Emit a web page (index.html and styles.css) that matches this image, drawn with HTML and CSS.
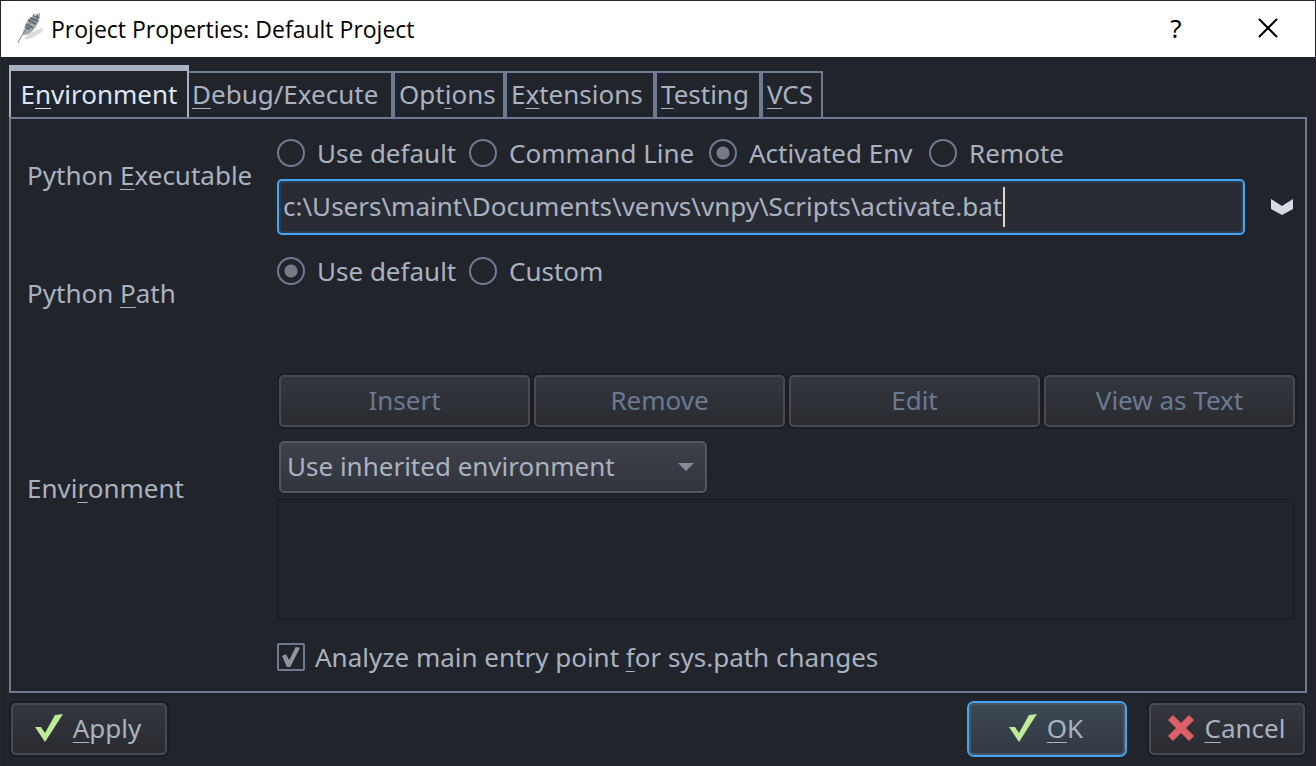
FILE: index.html
```html
<!DOCTYPE html>
<html lang="en">
<head>
<meta charset="utf-8">
<title>Project Properties: Default Project</title>
<link rel="stylesheet" href="styles.css">
</head>
<body>
<div class="dialog">
  <header class="titlebar">
    <svg class="app-icon" viewBox="0 0 30 34" aria-hidden="true">
      <path d="M7 27C10 22 18 18 26 16C27 19 24 21 20 23C15 26 10 28 7 27Z" fill="#dcdcdc"/>
      <path d="M6 23C6 15 10 7 17 3C20 1 23 0 23 2C23 7 21 12 18 16C14 21 11 23 7 23Z" fill="#a4aaad"/>
      <path d="M8 15L13 17M9 12L16 16M11 8L19 12M13 6L21 9M16 3L22 6" stroke="#626b70" stroke-width="2"/>
      <path d="M1 31C4 24 9 16 21 3" fill="none" stroke="#74797c" stroke-width="1"/>
      <path d="M6 19L8 15M17 4L22 1" stroke="#eeeeee" stroke-width="1"/>
    </svg>
    <h1 class="title">Project Properties: Default Project</h1>
    <button class="window-button" type="button" aria-label="Help">?</button>
    <button class="window-button" type="button" aria-label="Close">
      <svg class="close-icon" viewBox="0 0 20 20" aria-hidden="true"><path d="M1 1L19 19M19 1L1 19" stroke="#000" stroke-width="2"/></svg>
    </button>
  </header>

  <form class="content">
    <div class="tabs" role="tablist">
      <button class="tab tab-active" type="button" role="tab" aria-selected="true">E<u>n</u>vironment</button>
      <button class="tab" type="button" role="tab"><u>D</u>ebug/Execute</button>
      <button class="tab" type="button" role="tab">Opt<u>i</u>ons</button>
      <button class="tab" type="button" role="tab">E<u>x</u>tensions</button>
      <button class="tab" type="button" role="tab"><u>T</u>esting</button>
      <button class="tab" type="button" role="tab"><u>V</u>CS</button>
    </div>

    <div class="panel" role="tabpanel">
      <label class="row-label" for="executable">Python <u>E</u>xecutable</label>
      <div class="field">
        <div class="radios">
          <label class="choice"><input class="radio" type="radio" name="exe">Use default</label>
          <label class="choice"><input class="radio" type="radio" name="exe">Command Line</label>
          <label class="choice"><input class="radio" type="radio" name="exe" checked>Activated Env</label>
          <label class="choice"><input class="radio" type="radio" name="exe">Remote</label>
        </div>
        <div class="path-row">
          <div class="path-box">
            <input class="path" id="executable" type="text" value="c:\Users\maint\Documents\venvs\vnpy\Scripts\activate.bat">
            <span class="caret"></span>
          </div>
          <button class="history" type="button" aria-label="Recent values">
            <svg class="history-icon" viewBox="0 0 22 16" aria-hidden="true"><path d="M0 0L11 7L22 0V10L11 16L0 10Z" fill="#d7dbe8"/></svg>
          </button>
        </div>
      </div>

      <span class="row-label" id="python-path">Python <u>P</u>ath</span>
      <div class="field field-path" role="radiogroup" aria-labelledby="python-path">
        <div class="radios">
          <label class="choice"><input class="radio" type="radio" name="pypath" checked>Use default</label>
          <label class="choice"><input class="radio" type="radio" name="pypath">Custom</label>
        </div>
      </div>

      <label class="row-label row-label-env" for="env">Envi<u>r</u>onment</label>
      <div class="field field-env">
        <div class="list-buttons">
          <button class="button" type="button" disabled>Insert</button>
          <button class="button" type="button" disabled>Remove</button>
          <button class="button" type="button" disabled>Edit</button>
          <button class="button" type="button" disabled>View as Text</button>
        </div>
        <div class="select-box">
          <select class="select" id="env"><option>Use inherited environment</option></select>
          <svg class="select-arrow" viewBox="0 0 16 8" aria-hidden="true"><path d="M0 0H16L8 8Z" fill="#868a98"/></svg>
        </div>
        <textarea class="variables" aria-label="Environment variables" disabled></textarea>
      </div>

      <label class="choice analyze"><input class="checkbox" type="checkbox" checked><span>Analyze main entry point <u>f</u>or sys.path changes</span></label>
    </div>

    <footer class="actions">
      <button class="button action" type="button">
        <svg class="icon" viewBox="0 0 28 28" aria-hidden="true"><path d="M0 13H6L10 19L20 1L28 0L10 28Z" fill="#bfea98"/></svg>
        <span><u>A</u>pply</span>
      </button>
      <button class="button action action-default" type="submit">
        <svg class="icon" viewBox="0 0 28 28" aria-hidden="true"><path d="M0 13H6L10 19L20 1L28 0L10 28Z" fill="#bfea98"/></svg>
        <span><u>O</u>K</span>
      </button>
      <button class="button action" type="button">
        <svg class="icon" viewBox="0 0 28 28" aria-hidden="true"><path d="M6 1L14 9L22 1L27 6L19 14L27 22L22 27L14 19L6 27L1 22L9 14L1 6Z" fill="#dd5f68"/></svg>
        <span><u>C</u>ancel</span>
      </button>
    </footer>
  </form>
</div>
</body>
</html>
```
FILE: styles.css
```css
* { box-sizing: border-box; }

body {
  margin: 0;
  background: #21242b;
  color: #a9b2c0;
  font: 26px/36px "Noto Sans", "Open Sans", sans-serif;
}

button, input, select, textarea { margin: 0; font: inherit; color: inherit; }

u {
  text-decoration-thickness: 1px;
  text-underline-offset: 4px;
  text-decoration-skip-ink: none;
}

.dialog {
  display: flex;
  flex-direction: column;
  min-height: 100vh;
  border: 1px solid #25262d;
  border-bottom: 0;
}

.titlebar {
  display: flex;
  align-items: center;
  height: 56px;
  padding-left: 16px;
  background: #fff;
  color: #000;
}

.app-icon { width: 30px; height: 34px; }

.title {
  flex: 1;
  margin: 0 0 0 4px;
  font: 23px/32px "Open Sans", "Noto Sans", sans-serif;
}

.window-button {
  display: grid;
  place-items: center;
  width: 92px;
  height: 56px;
  padding: 0 2px 2px 0;
  border: 0;
  background: none;
}

.close-icon { width: 20px; height: 20px; }

.content {
  flex: 1;
  display: flex;
  flex-direction: column;
  padding: 8px;
}

.tabs {
  display: flex;
  align-items: flex-end;
  margin-bottom: -2px;
}

.tab {
  height: 48px;
  padding: 0 0 2px 4px;
  border: 2px solid #6f7b94;
  background: none;
  text-align: left;
  white-space: nowrap;
}

.tab:nth-child(2) { width: 204px; padding-left: 3px; border-left: 0; }
.tab:nth-child(3) { width: 112px; }
.tab:nth-child(4) { width: 150px; }
.tab:nth-child(5) { width: 106px; }
.tab:nth-child(6) { width: 62px; }

.tab-active {
  width: 180px;
  height: 54px;
  padding: 0;
  border-color: #a9b2c0;
  border-top-width: 6px;
  border-bottom-color: #6f7b94;
  color: #dde6f8;
  text-align: center;
}

.panel {
  flex: 1;
  display: grid;
  grid-template-columns: 250px 1fr;
  align-content: start;
  padding: 16px 10px 16px 16px;
  border: 2px solid #6f7b94;
}

.row-label { margin-top: 22px; }

.radios {
  display: grid;
  grid-template-columns: 192px 240px 220px auto;
  height: 36px;
}

.choice {
  display: flex;
  align-items: center;
  gap: 12px;
  white-space: nowrap;
}

.radio, .checkbox {
  appearance: none;
  flex: none;
  width: 28px;
  height: 28px;
  border: 2px solid #6f7b94;
}

.radio { border-radius: 50%; }
.radio:checked { background: radial-gradient(circle, #767b86 6px, transparent 7px); }

.path-row {
  display: flex;
  align-items: center;
  margin-top: 8px;
}

.path-box { position: relative; flex: 1; }

.path {
  display: block;
  width: 100%;
  height: 56px;
  padding: 0 4px 2px;
  border: 2px solid #42a5f5;
  border-radius: 5px;
  outline: 0;
  background: #292c34;
  box-shadow: inset 0 0 0 2px #2d3c4d;
}

.caret {
  position: absolute;
  left: 726px;
  top: 8px;
  width: 2px;
  height: 40px;
  background: #dfd6c8;
}

.history {
  display: grid;
  place-items: center;
  width: 50px;
  height: 56px;
  padding: 0 0 0 24px;
  border: 0;
  background: none;
}

.history-icon { width: 22px; height: 16px; }

.field-path { height: 120px; padding-top: 18px; }
#python-path { margin-top: 40px; }

.row-label-env { align-self: center; margin-top: 0; }
.field-env { padding-top: 20px; }

.list-buttons {
  display: grid;
  grid-template-columns: repeat(4, 1fr);
  gap: 4px;
  padding-left: 2px;
}

.button {
  display: flex;
  align-items: center;
  justify-content: center;
  height: 52px;
  padding: 0 0 2px;
  border: 2px solid #484a4f;
  border-radius: 5px;
  background: linear-gradient(#34373e, #292b30);
  box-shadow: 0 0 0 2px #1b1d22;
  white-space: nowrap;
}

.button:disabled { color: #6b7a94; }

.select-box {
  position: relative;
  width: 428px;
  margin: 14px 0 6px 2px;
}

.select {
  appearance: none;
  display: block;
  width: 100%;
  height: 52px;
  padding: 0 6px 2px;
  border: 2px solid #54575e;
  border-radius: 5px;
  background: linear-gradient(#3e4149, #32353d);
  box-shadow: 0 0 0 1px #1b1d22;
}

.select-arrow {
  position: absolute;
  right: 13px;
  top: 22px;
  width: 16px;
  height: 8px;
}

.variables {
  display: block;
  width: 100%;
  height: 121px;
  border: 2px solid #1b1d22;
  border-top-width: 1px;
  background: #21242b;
  resize: none;
}

.analyze { grid-column: 2; gap: 10px; margin-top: 19px; }
.checkbox { display: grid; place-items: center; border-radius: 2px; }
.checkbox:checked::after {
  content: "";
  width: 18px;
  height: 20px;
  background: #8e929d;
  clip-path: polygon(0 45%, 22% 36%, 40% 65%, 76% 0, 100% 4%, 46% 100%, 28% 100%);
}

.actions {
  display: flex;
  align-items: center;
  gap: 24px;
  padding: 10px 2px 4px;
}

.action { width: 156px; gap: 10px; padding-right: 2px; }
.action:first-child { margin-right: auto; }

.action-default {
  border-color: #4b5661;
  background: linear-gradient(#3e4853, #313a43);
  box-shadow: 0 0 0 2px #42a5f5;
}

.icon { width: 28px; height: 28px; }
```
